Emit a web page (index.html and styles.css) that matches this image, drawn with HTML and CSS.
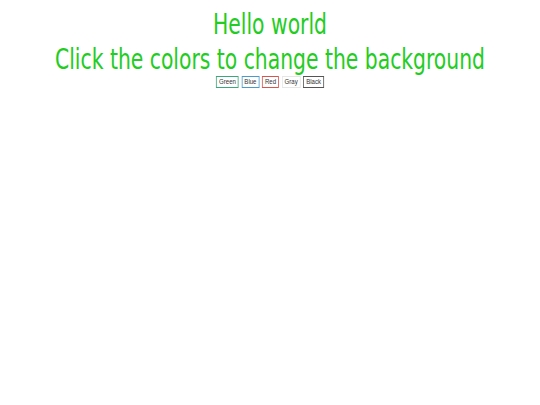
FILE: index.html
```html
<!DOCTYPE html>
<html>
<head>
<meta charset="utf-8">
<link rel="stylesheet" href="styles.css">
</head>
<body>
<div class="page">
  <h1 class="title">Hello world<br>Click the colors to change the background</h1>
  <div class="swatches">
    <button class="swatch green">Green</button>
    <button class="swatch blue">Blue</button>
    <button class="swatch red">Red</button>
    <button class="swatch gray">Gray</button>
    <button class="swatch black">Black</button>
  </div>
</div>
</body>
</html>
```
FILE: styles.css
```css
html, body { margin: 0; padding: 0; background: #ffffff; overflow: hidden; }
.page {
  text-align: center;
  padding-top: 7px;
  transform: scaleX(0.807);
  transform-origin: 270px 0;
}
.title {
  margin: 0;
  font-family: "DejaVu Sans Condensed", "DejaVu Sans", sans-serif;
  font-weight: normal;
  font-size: 28px;
  line-height: 35px;
  color: #22cc22;
  white-space: nowrap;
}
.swatches { display: flex; justify-content: center; gap: 3.5px; margin-top: -1px; }
.swatch {
  font-family: "Liberation Sans", Arial, sans-serif;
  font-size: 7.5px;
  height: 12px;
  padding: 0 2.5px;
  background: #fff;
  border: 1px solid #999;
  color: #333;
  line-height: 10px;
}
.green { border-color: #3aa87a; }
.blue { border-color: #4a9cc8; }
.red { border-color: #d9534f; }
.gray { border-color: #e6e6e6; }
.black { border-color: #555555; }
```
